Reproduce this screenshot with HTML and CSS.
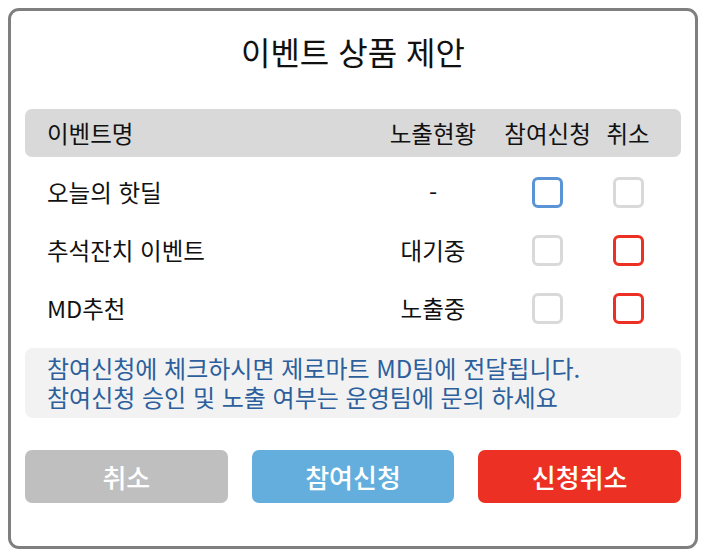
FILE: index.html
```html
<!DOCTYPE html>
<html lang="ko">
<head>
<meta charset="utf-8">
<title>이벤트 상품 제안</title>
<link rel="stylesheet" href="styles.css">
</head>
<body>
<div class="dialog">
  <h1 class="title">이벤트 상품 제안</h1>
  <div class="table">
    <div class="row head">
      <div class="c-name">이벤트명</div>
      <div class="c-status">노출현황</div>
      <div class="c-apply">참여신청</div>
      <div class="c-cancel">취소</div>
    </div>
    <div class="row">
      <div class="c-name">오늘의 핫딜</div>
      <div class="c-status">-</div>
      <div class="c-apply"><span class="box box-blue"></span></div>
      <div class="c-cancel"><span class="box box-gray"></span></div>
    </div>
    <div class="row">
      <div class="c-name">추석잔치 이벤트</div>
      <div class="c-status">대기중</div>
      <div class="c-apply"><span class="box box-gray"></span></div>
      <div class="c-cancel"><span class="box box-red"></span></div>
    </div>
    <div class="row">
      <div class="c-name">MD추천</div>
      <div class="c-status">노출중</div>
      <div class="c-apply"><span class="box box-gray"></span></div>
      <div class="c-cancel"><span class="box box-red"></span></div>
    </div>
  </div>
  <div class="info">
    <p>참여신청에 체크하시면 제로마트 MD팀에 전달됩니다.</p>
    <p>참여신청 승인 및 노출 여부는 운영팀에 문의 하세요</p>
  </div>
  <div class="buttons">
    <button class="btn btn-gray">취소</button>
    <button class="btn btn-blue">참여신청</button>
    <button class="btn btn-red">신청취소</button>
  </div>
</div>
</body>
</html>
```

FILE: styles.css
```css
* { box-sizing: border-box; }
body {
  margin: 8px;
  background: #ffffff;
  font-family: "Noto Sans CJK KR", "Noto Sans", sans-serif;
  color: #111111;
}
.dialog {
  width: 690px;
  height: 541px;
  border: 3px solid #7f7f7f;
  border-radius: 11px;
  padding: 20px 14px 0 14px;
  background: #ffffff;
}
.title {
  margin: 0;
  height: 40px;
  line-height: 40px;
  font-size: 32px;
  font-weight: 400;
  text-align: center;
}
.table {
  margin-top: 38px;
}
.row {
  display: grid;
  grid-template-columns: 1fr 148px 81px 80px;
  align-items: center;
  height: 58px;
  padding: 0 13px 0 22px;
  font-size: 23.5px;
}
.row.head {
  height: 48px;
  background: #d9d9d9;
  border-radius: 7px;
  margin-bottom: 6px;
}
.c-status, .c-apply, .c-cancel {
  text-align: center;
  display: flex;
  justify-content: center;
  align-items: center;
  white-space: nowrap;
}
.box {
  display: block;
  width: 31px;
  height: 31px;
  border: 3px solid #d9d9d9;
  border-radius: 6px;
}
.box-blue { border-color: #5b94d6; }
.box-red { border-color: #ec3124; }
.info {
  margin-top: 11px;
  height: 70px;
  background: #f2f2f2;
  border-radius: 8px;
  padding: 5px 22px 0 22px;
  color: #2c5f9c;
  font-size: 24px;
  line-height: 29px;
}
.info p { margin: 0; white-space: nowrap; }
.buttons {
  margin-top: 32px;
  display: grid;
  grid-template-columns: 1fr 1fr 1fr;
  gap: 24px;
}
.btn {
  height: 53px;
  border: none;
  border-radius: 7px;
  color: #ffffff;
  font-family: "Noto Sans CJK KR", "Noto Sans", sans-serif;
  font-size: 26px;
  font-weight: 500;
  padding: 0;
}
.btn-gray { background: #bfbfbf; }
.btn-blue { background: #63aedc; }
.btn-red { background: #ec3124; }
```
